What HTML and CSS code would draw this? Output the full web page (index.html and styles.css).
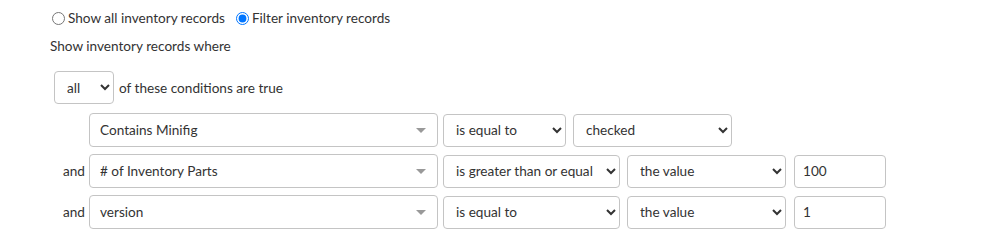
FILE: index.html
```html
<!DOCTYPE html>
<html>
<head>
<meta charset="utf-8">
<link rel="stylesheet" href="styles.css">
</head>
<body>
<div class="panel">
  <div class="mode">
    <label class="radio"><input type="radio" name="mode"> Show all inventory records</label>
    <label class="radio"><input type="radio" name="mode" checked> Filter inventory records</label>
  </div>
  <div class="where">Show inventory records where</div>
  <div class="match">
    <select class="ctl sel-match"><option>all</option><option>any</option></select>
    <span class="match-text">of these conditions are true</span>
  </div>
  <div class="conditions">
    <div class="cond">
      <span class="join"></span>
      <div class="ctl combo"><span>Contains Minifig</span><i class="tri"></i></div>
      <select class="ctl op op-short"><option>is equal to</option></select>
      <select class="ctl val"><option>checked</option></select>
    </div>
    <div class="cond">
      <span class="join">and</span>
      <div class="ctl combo"><span># of Inventory Parts</span><i class="tri"></i></div>
      <select class="ctl op op-long"><option>is greater than or equal to</option></select>
      <select class="ctl val"><option>the value</option></select>
      <input class="ctl num" type="text" value="100">
    </div>
    <div class="cond">
      <span class="join">and</span>
      <div class="ctl combo"><span>version</span><i class="tri"></i></div>
      <select class="ctl op op-long"><option>is equal to</option></select>
      <select class="ctl val"><option>the value</option></select>
      <input class="ctl num" type="text" value="1">
    </div>
  </div>
</div>
</body>
</html>
```
FILE: styles.css
```css
html, body {
  margin: 0;
  background: #fff;
}
body {
  font-family: Lato, "Open Sans", sans-serif;
  font-size: 13.6px;
  color: #333;
}
.panel {
  padding: 8px 0 0 50px;
}
.mode {
  display: flex;
  align-items: center;
  height: 20px;
  gap: 9px;
}
.radio {
  display: flex;
  align-items: center;
  gap: 2px;
}
.radio input {
  margin: 0 1px 0 2px;
  width: 13px;
  height: 13px;
}
.where {
  margin-top: 8px;
  line-height: 20px;
}
.match {
  margin-top: 15px;
  margin-left: 4px;
  display: flex;
  align-items: center;
  gap: 5px;
}
.ctl {
  box-sizing: border-box;
  height: 33px;
  border: 1px solid #c4c4c4;
  border-radius: 4px;
  background: #fff;
  font-family: Lato, "Open Sans", sans-serif;
  font-size: 13.6px;
  color: #333;
}
select.ctl {
  padding: 0 8px;
}
select.sel-match {
  width: 60px;
}
.conditions {
  margin-top: 9px;
  margin-left: 4px;
  display: flex;
  flex-direction: column;
  gap: 7px;
}
.cond {
  display: flex;
  align-items: center;
}
.join {
  width: 31px;
  text-align: right;
  margin-right: 4px;
}
.combo {
  width: 349px;
  display: flex;
  align-items: center;
  justify-content: space-between;
  padding: 0 11px 0 10px;
  height: 34px;
}
.tri {
  width: 0;
  height: 0;
  border-left: 5px solid transparent;
  border-right: 5px solid transparent;
  border-top: 5px solid #999;
}
.op {
  margin-left: 5px;
}
.op-short { width: 123px; }
.op-long { width: 177px; }
.val {
  margin-left: 7px;
  width: 159px;
}
.num {
  margin-left: 8px;
  width: 92px;
  padding: 0 8px;
  outline: none;
}
```
